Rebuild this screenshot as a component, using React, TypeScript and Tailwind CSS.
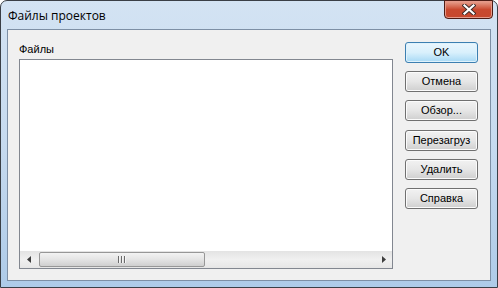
import React from 'react';

const buttons = ['Отмена', 'Обзор...', 'Перезагруз', 'Удалить', 'Справка'];

const CloseGlyph = () => (
  <svg width="14" height="11" viewBox="0 0 14 11">
    <path d="M2.5 1.5 L11.5 9.5 M11.5 1.5 L2.5 9.5" stroke="#3a2a28" strokeWidth="4" strokeLinecap="square" />
    <path d="M2.5 1.5 L11.5 9.5 M11.5 1.5 L2.5 9.5" stroke="#ffffff" strokeWidth="2.2" strokeLinecap="square" />
  </svg>
);

const WinButton: React.FC<{ label: string; primary?: boolean }> = ({ label, primary }) => (
  <button
    className={
      primary
        ? 'h-[21px] w-[73px] rounded-[3px] border border-[#3c7fb1] bg-gradient-to-b from-[#eaf6fd] via-[#d9f0fc] to-[#a7d9f5] text-[11px] leading-none text-black shadow-[inset_0_0_0_1px_#dff2fc]'
        : 'h-[21px] w-[73px] rounded-[3px] border border-[#707070] bg-gradient-to-b from-[#f2f2f2] via-[#e6e6e6] to-[#cfcfcf] text-[11px] leading-none text-black shadow-[inset_0_0_0_1px_#fbfbfb]'
    }
    style={{ fontFamily: '"Liberation Sans", Arial, sans-serif' }}
  >
    {label}
  </button>
);

export default function App() {
  return (
    <div className="w-[498px] h-[288px] bg-white">
      <div className="flex h-full w-full flex-col rounded-t-[7px] border border-[#3a3f46] bg-gradient-to-b from-[#d3e3f3] via-[#c6daef] to-[#aecbe8] px-[6px] pb-[6px]">
        {/* title bar */}
        <div className="flex h-[28px] items-start justify-between">
          <div
            className="pt-[8px] pl-[1px] text-[12px] leading-[14px] text-black"
            style={{ fontFamily: '"Open Sans", "Noto Sans", sans-serif' }}
          >
            Файлы проектов
          </div>
          <div className="-mt-[1px] mr-[-2px] flex h-[19px] w-[49px] items-center justify-center rounded-b-[4px] border border-[#4d1c15] bg-gradient-to-b from-[#e8a493] via-[#c9492f] to-[#c6482e] shadow-[inset_0_0_0_1px_#e59a8a]">
            <CloseGlyph />
          </div>
        </div>

        {/* client area */}
        <div
          className="flex flex-1 border border-[#7d8fa5] bg-[#f0f0f0] pl-[11px]"
          style={{ fontFamily: '"Liberation Sans", Arial, sans-serif' }}
        >
          <div className="flex flex-col pt-[12px]">
            <div className="h-[17px] text-[11px] leading-[14px] text-black">Файлы</div>
            <div className="flex h-[210px] w-[374px] flex-col border border-[#828790] bg-white">
              <div className="flex-1" />
              {/* horizontal scrollbar */}
              <div className="flex h-[17px] items-stretch bg-gradient-to-b from-[#e3e3e3] via-[#f0f0f0] to-[#e6e6e6]">
                <div className="flex w-[17px] items-center justify-center">
                  <svg width="4" height="7" viewBox="0 0 4 7">
                    <path d="M4 0 L0 3.5 L4 7 Z" fill="#3d3d3d" />
                  </svg>
                </div>
                <div className="my-[1px] ml-[2px] flex w-[166px] items-center justify-center rounded-[2px] border border-[#979797] bg-gradient-to-b from-[#f3f3f3] via-[#e4e4e4] to-[#cfcfcf]">
                  <svg width="8" height="7" viewBox="0 0 8 7">
                    <path d="M0.5 0 V7 M3.5 0 V7 M6.5 0 V7" stroke="#6a6a6a" strokeWidth="1" />
                    <path d="M1.5 0 V7 M4.5 0 V7 M7.5 0 V7" stroke="#f5f5f5" strokeWidth="1" />
                  </svg>
                </div>
                <div className="flex-1" />
                <div className="flex w-[17px] items-center justify-center">
                  <svg width="4" height="7" viewBox="0 0 4 7">
                    <path d="M0 0 L4 3.5 L0 7 Z" fill="#3d3d3d" />
                  </svg>
                </div>
              </div>
            </div>
          </div>

          <div className="ml-[12px] flex flex-col gap-[8.2px] pt-[12px]">
            <WinButton label="OK" primary />
            {buttons.map((b) => (
              <WinButton key={b} label={b} />
            ))}
          </div>
        </div>
      </div>
    </div>
  );
}
